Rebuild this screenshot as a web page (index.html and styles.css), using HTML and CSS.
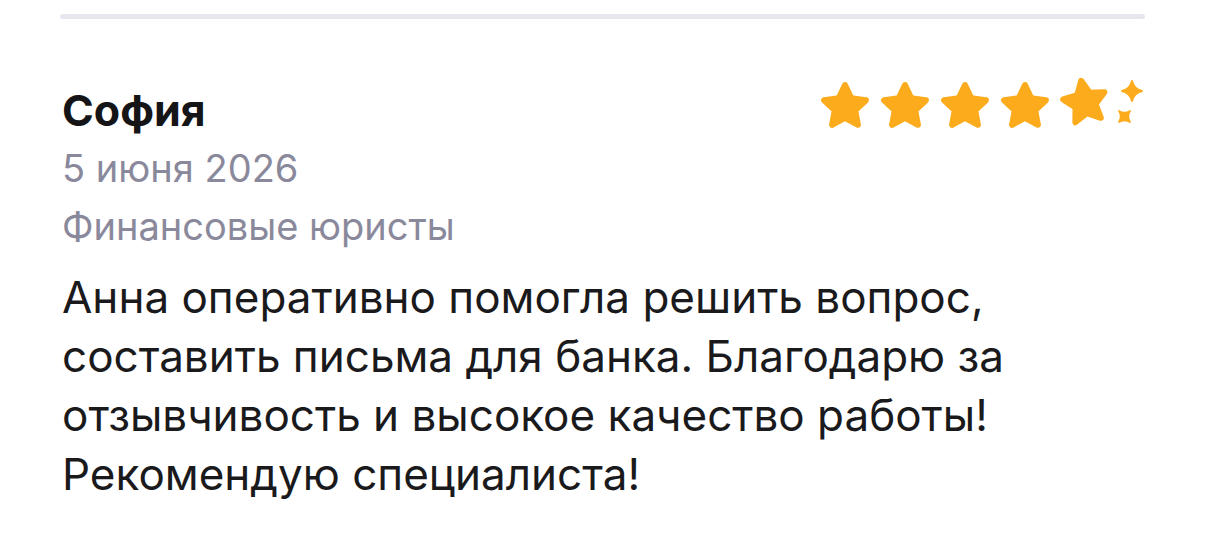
FILE: index.html
```html
<!DOCTYPE html>
<html lang="ru">
<head>
<meta charset="utf-8">
<title>Отзыв</title>
<link rel="stylesheet" href="styles.css">
</head>
<body>
<div class="review">
  <div class="divider"></div>
  <div class="head">
    <div class="name">София</div>
    <svg class="stars" width="330" height="54" viewBox="0 0 330 54" aria-label="Оценка">
      <defs>
        <polygon id="st" points="0,-22 6.3,-8.7 20.92,-6.8 10.2,3.3 12.93,17.8 0,10.8 -12.93,17.8 -10.2,3.3 -20.92,-6.8 -6.3,-8.7"/>
        <path id="sp" d="M0,-10 Q1.8,-1.8 10,0 Q1.8,1.8 0,10 Q-1.8,1.8 -10,0 Q-1.8,-1.8 0,-10Z"/>
      </defs>
      <g fill="#fcab1c" stroke="#fcab1c" stroke-width="6" stroke-linejoin="round">
        <use href="#st" x="30" y="31"/>
        <use href="#st" x="90" y="31"/>
        <use href="#st" x="150" y="31"/>
        <use href="#st" x="210" y="31"/>
        <use href="#st" transform="translate(270 26.5) rotate(-10)"/>
      </g>
      <g fill="#fcab1c" stroke="#fcab1c" stroke-width="2" stroke-linejoin="round">
        <use href="#sp" transform="translate(317 15)"/>
        <use href="#sp" transform="translate(309.5 40.5) rotate(45) scale(0.8)"/>
      </g>
    </svg>
  </div>
  <div class="meta date">5 июня 2026</div>
  <div class="meta">Финансовые юристы</div>
  <p class="text">Анна оперативно помогла решить вопрос, составить письма для банка. Благодарю за отзывчивость и высокое качество работы! Рекомендую специалиста!</p>
</div>
</body>
</html>
```
FILE: styles.css
```css
html, body {
  margin: 0;
  padding: 0;
  background: #ffffff;
}
body {
  font-family: Inter, "Noto Sans", "DejaVu Sans", sans-serif;
}
.review {
  padding: 14px 61px 0 60px;
}
.divider {
  height: 5px;
  background: #e7e6ef;
  border-radius: 3px;
}
.head {
  display: flex;
  justify-content: space-between;
  align-items: flex-start;
  margin-top: 57px;
  padding-left: 2px;
}
.name {
  margin-top: 8px;
  font-size: 43px;
  line-height: 52px;
  font-weight: 700;
  color: #151517;
}
.stars {
  display: block;
  flex: none;
}
.meta {
  padding-left: 2px;
  font-size: 38px;
  line-height: 58px;
  color: #8a899c;
}
.date {
  margin-top: 3px;
}
.text {
  margin: 13px 0 0;
  padding-left: 2px;
  font-size: 44px;
  line-height: 59px;
  color: #1a1a1c;
  max-width: 960px;
}
```
